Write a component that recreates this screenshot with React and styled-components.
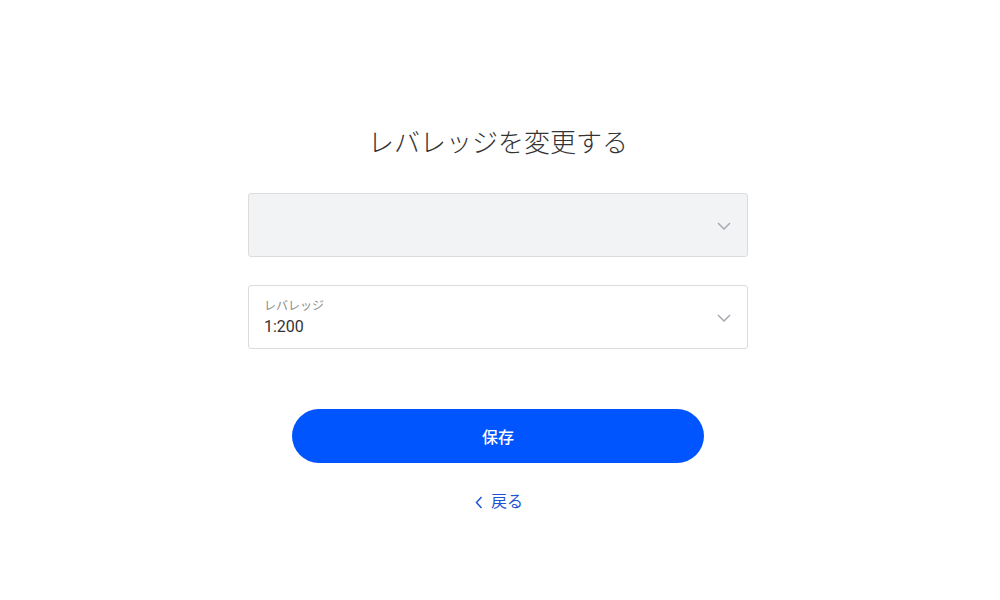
import React from "react";
import styled, { createGlobalStyle } from "styled-components";

const Global = createGlobalStyle`
  html, body { margin: 0; padding: 0; background: #fff; }
  body { font-family: Roboto, "Noto Sans CJK JP", sans-serif; color: #333; }
  * { box-sizing: border-box; }
`;

const Page = styled.div`
  display: flex;
  flex-direction: column;
  align-items: center;
  padding: 125px 4px 0 0;
`;

const Title = styled.h1`
  margin: 0;
  font-size: 26px;
  line-height: 36px;
  font-weight: 300;
  color: #333;
`;

const Form = styled.div`
  width: 500px;
  display: flex;
  flex-direction: column;
  margin-top: 32px;
  gap: 28px;
`;

const Field = styled.div`
  height: 64px;
  border: 1px solid #dcdcdc;
  border-radius: 3px;
  background: ${(p) => (p.$disabled ? "#f2f3f5" : "#fff")};
  display: flex;
  align-items: center;
  padding: 0 16px 0 15px;
`;

const FieldBody = styled.div`
  flex: 1;
  display: flex;
  flex-direction: column;
  gap: 2px;
  padding-top: 1px;
`;

const Label = styled.span`
  font-size: 12px;
  line-height: 16px;
  color: #8a8a8a;
`;

const Value = styled.span`
  font-size: 16px;
  line-height: 22px;
  color: #333;
`;

const Chevron = styled.svg`
  width: 14px;
  height: 8px;
  margin-top: 2px;
`;

const Actions = styled.div`
  display: flex;
  flex-direction: column;
  align-items: center;
  margin-top: 60px;
  gap: 27px;
`;

const SaveButton = styled.button`
  width: 412px;
  height: 54px;
  border: none;
  border-radius: 27px;
  background: #0055ff;
  color: #fff;
  font-family: inherit;
  font-size: 16px;
  font-weight: 500;
  cursor: pointer;
`;

const BackLink = styled.a`
  display: flex;
  align-items: center;
  gap: 8px;
  font-size: 16px;
  line-height: 24px;
  color: #1f55d4;
  text-decoration: none;
  margin-left: 2px;
`;

const ChevronDown = () => (
  <Chevron viewBox="0 0 14 8" fill="none">
    <path d="M1 1l6 6 6-6" stroke="#a7aab0" strokeWidth="1.5" />
  </Chevron>
);

export default function App() {
  return (
    <>
      <Global />
      <Page>
        <Title>レバレッジを変更する</Title>
        <Form>
          <Field $disabled>
            <FieldBody />
            <ChevronDown />
          </Field>
          <Field>
            <FieldBody>
              <Label>レバレッジ</Label>
              <Value>1:200</Value>
            </FieldBody>
            <ChevronDown />
          </Field>
        </Form>
        <Actions>
          <SaveButton>保存</SaveButton>
          <BackLink href="#">
            <svg width="8" height="13" viewBox="0 0 8 13" fill="none">
              <path d="M6.5 1L1.5 6.5l5 5.5" stroke="#1f55d4" strokeWidth="1.5" />
            </svg>
            戻る
          </BackLink>
        </Actions>
      </Page>
    </>
  );
}
